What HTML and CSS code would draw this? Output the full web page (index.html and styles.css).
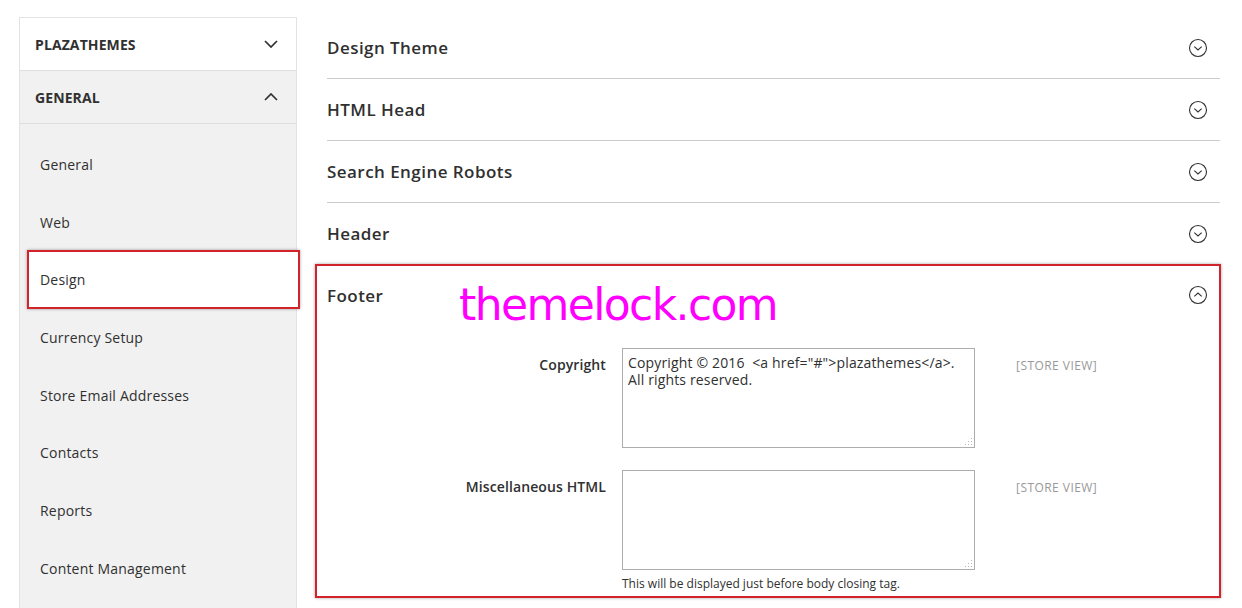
FILE: index.html
```html
<!DOCTYPE html>
<html>
<head>
<meta charset="utf-8">
<link rel="stylesheet" href="styles.css">
</head>
<body>
<div class="page">
  <aside class="sidebar">
    <div class="nav-title white">
      <span>PLAZATHEMES</span>
      <svg class="chev" width="14" height="8" viewBox="0 0 14 8"><path d="M1 1 L7 7 L13 1" fill="none" stroke="#303030" stroke-width="1.7"/></svg>
    </div>
    <div class="nav-title">
      <span>GENERAL</span>
      <svg class="chev" width="14" height="8" viewBox="0 0 14 8"><path d="M1 7 L7 1 L13 7" fill="none" stroke="#303030" stroke-width="1.7"/></svg>
    </div>
    <ul class="nav-list">
      <li class="nav-item"><span>General</span></li>
      <li class="nav-item"><span>Web</span></li>
      <li class="nav-item active"><span>Design</span></li>
      <li class="nav-item"><span>Currency Setup</span></li>
      <li class="nav-item"><span>Store Email Addresses</span></li>
      <li class="nav-item"><span>Contacts</span></li>
      <li class="nav-item"><span>Reports</span></li>
      <li class="nav-item"><span>Content Management</span></li>
    </ul>
  </aside>

  <main class="main">
    <section class="block">
      <div class="block-head">
        <span class="block-title">Design Theme</span>
        <svg class="toggle" width="20" height="20" viewBox="0 0 20 20"><circle cx="10" cy="10" r="8.5" fill="none" stroke="#303030" stroke-width="1.1"/><path d="M6.3 8.6 L10 12 L13.7 8.6" fill="none" stroke="#303030" stroke-width="1.1"/></svg>
      </div>
    </section>
    <section class="block">
      <div class="block-head">
        <span class="block-title">HTML Head</span>
        <svg class="toggle" width="20" height="20" viewBox="0 0 20 20"><circle cx="10" cy="10" r="8.5" fill="none" stroke="#303030" stroke-width="1.1"/><path d="M6.3 8.6 L10 12 L13.7 8.6" fill="none" stroke="#303030" stroke-width="1.1"/></svg>
      </div>
    </section>
    <section class="block">
      <div class="block-head">
        <span class="block-title">Search Engine Robots</span>
        <svg class="toggle" width="20" height="20" viewBox="0 0 20 20"><circle cx="10" cy="10" r="8.5" fill="none" stroke="#303030" stroke-width="1.1"/><path d="M6.3 8.6 L10 12 L13.7 8.6" fill="none" stroke="#303030" stroke-width="1.1"/></svg>
      </div>
    </section>
    <section class="block">
      <div class="block-head">
        <span class="block-title">Header</span>
        <svg class="toggle" width="20" height="20" viewBox="0 0 20 20"><circle cx="10" cy="10" r="8.5" fill="none" stroke="#303030" stroke-width="1.1"/><path d="M6.3 8.6 L10 12 L13.7 8.6" fill="none" stroke="#303030" stroke-width="1.1"/></svg>
      </div>
    </section>
    <section class="block open">
      <div class="block-head">
        <span class="block-title">Footer</span>
        <svg class="toggle" width="20" height="20" viewBox="0 0 20 20"><circle cx="10" cy="10" r="8.5" fill="none" stroke="#303030" stroke-width="1.1"/><path d="M6.3 11.4 L10 8 L13.7 11.4" fill="none" stroke="#303030" stroke-width="1.1"/></svg>
      </div>
      <div class="watermark">themelock.com</div>
      <div class="fields">
        <label class="f-label">Copyright</label>
        <div class="f-control">
          <div class="textarea">Copyright © 2016&nbsp; &lt;a href="#"&gt;plazathemes&lt;/a&gt;.<br>All rights reserved.</div>
        </div>
        <div class="f-scope">[STORE VIEW]</div>

        <label class="f-label">Miscellaneous HTML</label>
        <div class="f-control">
          <div class="textarea"></div>
          <div class="note">This will be displayed just before body closing tag.</div>
        </div>
        <div class="f-scope">[STORE VIEW]</div>
      </div>
    </section>
  </main>
</div>
</body>
</html>
```

FILE: styles.css
```css
* { box-sizing: border-box; }
html, body { margin: 0; padding: 0; background: #fff; }
body {
  font-family: "Open Sans", "DejaVu Sans", sans-serif;
  color: #303030;
  font-size: 14px;
  overflow: hidden;
  height: 608px;
}
.page {
  display: flex;
  align-items: flex-start;
  padding: 17px 0 0 19px;
}

/* Sidebar */
.sidebar {
  width: 278px;
  flex: 0 0 278px;
  background: #f1f1f1;
  border: 1px solid #e3e3e3;
  border-bottom: none;
  min-height: 620px;
}
.nav-title {
  height: 53px;
  display: flex;
  align-items: center;
  justify-content: space-between;
  padding: 0 18px 0 15px;
  font-weight: 700;
  font-size: 14px;
  letter-spacing: 0.1px;
  border-bottom: 1px solid #dedede;
}
.nav-title.white { background: #fff; }
.chev { display: block; }
.nav-list {
  list-style: none;
  margin: 0;
  padding: 11.6px 0 20px 0;
}
.nav-item {
  position: relative;
  height: 57.7px;
  display: flex;
  align-items: center;
  padding-left: 20px;
  font-size: 14px;
  letter-spacing: 0.2px;
  color: #303030;
}
.nav-item span { position: relative; z-index: 1; }
.nav-item.active::after {
  content: "";
  position: absolute;
  left: 7px;
  right: -4px;
  top: -1px;
  bottom: 0;
  background: #fff;
  border: 2px solid #d3232a;
  box-shadow: 0 0 3px rgba(0,0,0,0.35);
  z-index: 0;
}

/* Main */
.main {
  margin-left: 30px;
  width: 893px;
  flex: 0 0 893px;
}
.block { position: relative; }
.block-head {
  height: 62px;
  display: flex;
  align-items: center;
  justify-content: space-between;
  border-bottom: 1px solid #cccccc;
  padding-right: 12px;
}
.block.open .block-head { border-bottom: none; padding-bottom: 2px; }
.block-title {
  font-size: 17px;
  font-weight: 600;
  letter-spacing: 0.45px;
  color: #303030;
}
.toggle { display: block; }

.block.open::after {
  content: "";
  position: absolute;
  left: -12px;
  right: -1px;
  top: -1px;
  bottom: -1px;
  border: 2px solid #d3232a;
  box-shadow: 0 0 3px rgba(0,0,0,0.35);
  pointer-events: none;
}
.watermark {
  position: absolute;
  left: 132px;
  top: 10px;
  font-family: "DejaVu Sans", sans-serif;
  font-size: 44px;
  letter-spacing: -1.6px;
  color: #ff00ff;
  line-height: 60px;
}

.fields {
  display: grid;
  grid-template-columns: 279px 353px auto;
  column-gap: 16px;
  row-gap: 22px;
  padding: 21px 0 5px 0;
}
.f-label {
  text-align: right;
  font-weight: 600;
  font-size: 14px;
  line-height: 20px;
  padding-top: 7px;
  letter-spacing: 0.1px;
}
.textarea {
  height: 100px;
  border: 1px solid #adadad;
  padding: 5px 5px;
  font-size: 14px;
  line-height: 17px;
  letter-spacing: 0.15px;
  color: #303030;
  position: relative;
}
.textarea::after {
  content: "";
  position: absolute;
  right: 2px;
  bottom: 2px;
  width: 8px;
  height: 8px;
  background:
    radial-gradient(circle, #b5b5b5 0.7px, transparent 1px) 0 0 / 3px 3px;
  clip-path: polygon(100% 0, 100% 100%, 0 100%);
}
.note {
  font-size: 12px;
  line-height: 16px;
  padding-top: 6px;
  color: #303030;
}
.f-scope {
  padding-left: 25px;
  padding-top: 10px;
  font-size: 12px;
  line-height: 16px;
  color: #999;
  letter-spacing: 0.45px;
}
```
